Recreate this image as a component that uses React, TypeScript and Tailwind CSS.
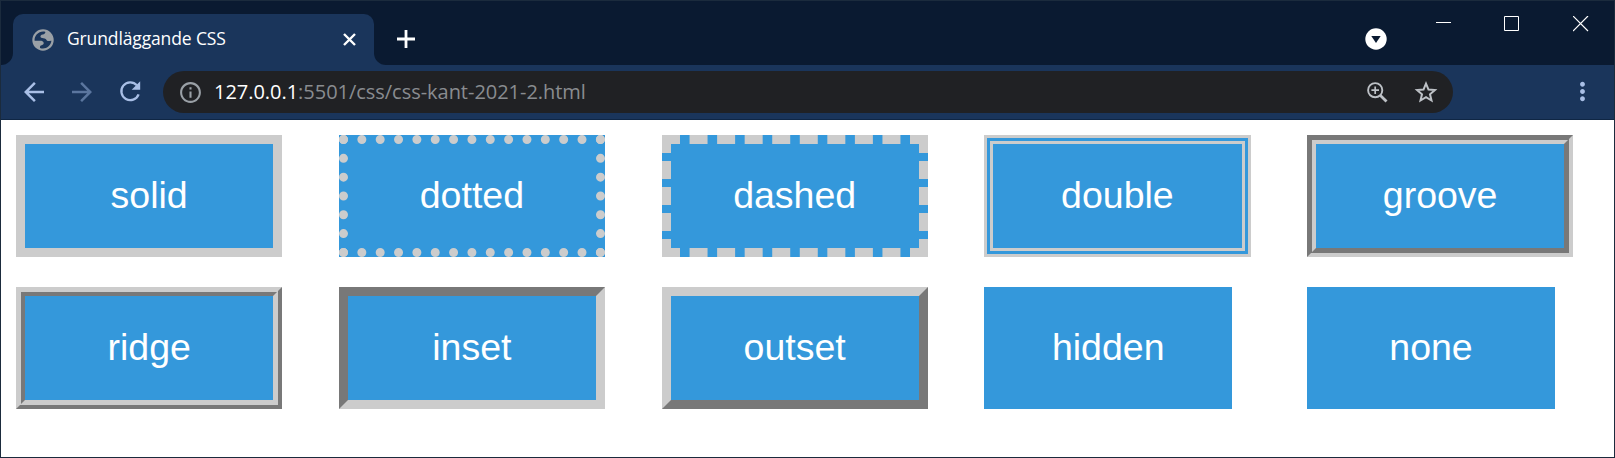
import { MdArrowBack, MdArrowForward, MdInfoOutline, MdMoreVert } from "react-icons/md";

const rows = [
  [
    { name: "solid", border: "w-[266.3px] border-9 border-solid" },
    { name: "dotted", border: "w-[266.3px] border-9 border-dotted" },
    { name: "dashed", border: "w-[266.3px] border-9 border-dashed" },
    { name: "double", border: "w-[266.3px] border-9 border-double" },
    { name: "groove", border: "w-[266.3px] border-9 [border-style:groove]" },
  ],
  [
    { name: "ridge", border: "w-[266.3px] border-9 [border-style:ridge]" },
    { name: "inset", border: "w-[266.3px] border-9 [border-style:inset]" },
    { name: "outset", border: "w-[266.3px] border-9 [border-style:outset]" },
    { name: "hidden", border: "w-[248px] border-hidden" },
    { name: "none", border: "w-[248px] border-none" },
  ],
];

function GlobeIcon() {
  return (
    <svg className="size-[22px] shrink-0" viewBox="0 0 22 22">
      <circle cx="11" cy="11" r="10.7" fill="#9aa0a6" />
      <path
        d="M13.5 2.900C12.800 4.400 12.600 5.300 10.800 5.600C9 5.900 8 7 8.600 8.300C9.200 9.500 11 9 12.600 9.400C14.600 9.900 14.300 11.600 15.600 12C17 12.300 18.300 11.500 19.400 11.700C19.200 13.800 18.200 15.800 16.600 17.200C14.200 19.400 11 20 8 18.900C7.900 17.400 8.300 16.600 9.600 16.300C11.200 15.900 12 15 11.600 13.600C11.200 12.100 10 11.700 8.200 11.700L2.600 11.700C2.100 6.200 7.600 1.200 13.500 2.900Z"
        fill="#1a355b"
      />
    </svg>
  );
}

function TabStrip() {
  return (
    <div className="flex h-16 bg-[#1a355b]">
      <div className="w-3 shrink-0 rounded-br-[12px] bg-[#0a1a31]" />
      <div className="w-[361px] shrink-0 bg-[linear-gradient(#0a1a31_60%,#1a355b_60%)] pt-[13px]">
        <div className="flex h-[51px] items-center rounded-t-[10px] bg-[#1a355b] pl-[19px] pr-[18.5px]">
          <GlobeIcon />
          <span className="ml-[13px] flex-1 whitespace-nowrap pb-0.5 font-['Open_Sans',sans-serif] text-[17.5px] tracking-[-0.13px] text-white">
            Grundläggande CSS
          </span>
          <svg className="size-[13px]" viewBox="0 0 13 13" stroke="#fff" strokeWidth="2.4">
            <path d="M1 1l11 11M12 1L1 12" />
          </svg>
        </div>
      </div>
      <div className="flex flex-1 items-start rounded-bl-[12px] bg-[#0a1a31] pl-[23px] text-white">
        <svg className="mt-[29px] size-[18px]" viewBox="0 0 18 18" stroke="#fff" strokeWidth="2.8">
          <path d="M9 0v18M0 9h18" />
        </svg>
        <svg className="ml-auto mt-[27px] size-[22px]" viewBox="0 0 22 22">
          <circle cx="11" cy="11" r="10.7" fill="#fff" />
          <path d="M6.3 8h9.4L11 15z" fill="#0a1a31" />
        </svg>
        <div className="ml-[48px] mr-[25px] mt-[15px] flex gap-[53px]">
          <svg className="h-[15px] w-4" viewBox="0 0 16 15" stroke="#fff">
            <path d="M1 6.5h15" />
          </svg>
          <svg className="size-4" viewBox="0 0 16 16" fill="none" stroke="#fff">
            <path d="M.5.5h14v14H.5z" />
          </svg>
          <svg className="size-4" viewBox="0 0 16 16" stroke="#fff" strokeWidth="1.2">
            <path d="M0 0l15 15M15 0L0 15" />
          </svg>
        </div>
      </div>
    </div>
  );
}

function Toolbar() {
  return (
    <div className="flex h-[55px] items-start border-b border-[#0f2644] bg-[#1a355b] pl-[18px] pt-[6px] text-[#a9bfe6]">
      <div className="flex h-[42px] items-center gap-[18px] pb-px">
        <MdArrowBack className="size-[30px]" />
        <MdArrowForward className="size-[30px] text-[#5b769f]" />
        <svg className="size-[31px]" viewBox="0 0 31 31" fill="none">
          <path d="M21.900 9.300A8.900 8.900 0 1 0 23.600 18.400" stroke="currentColor" strokeWidth="2.300" />
          <path d="M25.200 5.300v8.500h-8.500z" fill="currentColor" />
        </svg>
      </div>
      <div className="ml-[17px] flex h-[42px] w-[1290px] items-center rounded-full bg-[#202124] pl-[15px] pr-[15px] text-[#9aa0a6]">
        <MdInfoOutline className="size-[25px]" />
        <span className="ml-[11px] flex-1 whitespace-nowrap font-['Open_Sans',sans-serif] text-[20px] tracking-[-0.03px] text-[#898c90]">
          <span className="text-white">127.0.0.1</span>:5501/css/css-kant-2021-2.html
        </span>
        <svg className="size-[21px]" viewBox="0 0 21 21" fill="none" stroke="#bdc1c6">
          <circle cx="8.200" cy="8.200" r="7.100" strokeWidth="1.900" />
          <path d="M13.200 13.200l6.300 6.300" strokeWidth="2.800" />
          <path d="M8.200 4.400v7.600M4.400 8.200H12" strokeWidth="1.700" />
        </svg>
        <svg className="ml-[26px] size-6" viewBox="0 0 24 24" fill="none" stroke="#bdc1c6" strokeWidth="2">
          <path d="M12 3.600l2.500 6 6.400.5-4.900 4.200 1.500 6.200-5.500-3.300-5.500 3.300L8 14.300l-4.900-4.200 6.400-.5z" />
        </svg>
      </div>
      <div className="ml-[115px] flex h-[42px] items-center pb-px">
        <MdMoreVert className="size-[29px]" />
      </div>
    </div>
  );
}

export default function App() {
  return (
    <div className="flex h-[458px] w-[1615px] flex-col overflow-hidden border border-[#1b2b3d] bg-white">
      <TabStrip />
      <Toolbar />
      <main className="flex flex-col gap-[30px] pl-[15px] pt-[15px]">
        {rows.map((row, i) => (
          <div key={i} className="grid grid-cols-[repeat(5,322.75px)]">
            {row.map(({ name, border }) => (
              <div
                key={name}
                className={`flex h-[122px] items-center justify-center justify-self-start border-[#ccc] bg-[#3498db] font-['Liberation_Sans',Arial,sans-serif] text-[37.5px] leading-none text-white ${border}`}
              >
                {name}
              </div>
            ))}
          </div>
        ))}
      </main>
    </div>
  );
}
